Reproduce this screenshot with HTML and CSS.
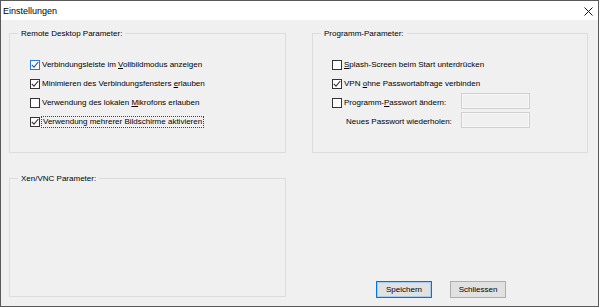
FILE: index.html
```html
<!DOCTYPE html>
<html lang="de">
<head>
  <meta charset="UTF-8">
  <title>Einstellungen</title>
  <link rel="stylesheet" href="styles.css">
</head>
<body>
  <div class="window">
    <div class="titlebar">
      <span class="title">Einstellungen</span>
      <svg class="close" width="9" height="9" viewBox="0 0 9 9">
        <path d="M0.5 0.5 L8.5 8.5 M8.5 0.5 L0.5 8.5" stroke="#111" stroke-width="1"/>
      </svg>
    </div>

    <div class="content">
      <div class="top-row">
        <!-- Remote Desktop -->
        <div class="group group-left">
          <div class="group-title">Remote Desktop Parameter:</div>
          <div class="options options-left">
            <div class="option">
              <span class="box box-hover checked">
                <svg width="8" height="8" viewBox="0 0 8 8"><path d="M0.8 3.8 L3 6.2 L7.3 1" fill="none" stroke="#1c5aa6" stroke-width="1.1"/></svg>
              </span>
              <span class="label">Verbindungsleiste im <u>V</u>ollbildmodus anzeigen</span>
            </div>
            <div class="option">
              <span class="box checked">
                <svg width="8" height="8" viewBox="0 0 8 8"><path d="M0.8 3.8 L3 6.2 L7.3 1" fill="none" stroke="#333" stroke-width="1.1"/></svg>
              </span>
              <span class="label">Minimieren des Verbindungsfensters <u>e</u>rlauben</span>
            </div>
            <div class="option">
              <span class="box"></span>
              <span class="label">Verwendung des lokalen <u>M</u>ikrofons erlauben</span>
            </div>
            <div class="option">
              <span class="box checked">
                <svg width="8" height="8" viewBox="0 0 8 8"><path d="M0.8 3.8 L3 6.2 L7.3 1" fill="none" stroke="#333" stroke-width="1.1"/></svg>
              </span>
              <span class="label focused">Verwendung mehrerer Bildschirme aktivieren</span>
            </div>
          </div>
        </div>

        <!-- Programm -->
        <div class="group group-right">
          <div class="group-title">Programm-Parameter:</div>
          <div class="options options-right">
            <div class="option">
              <span class="box"></span>
              <span class="label"><u>S</u>plash-Screen beim Start unterdrücken</span>
            </div>
            <div class="option">
              <span class="box checked">
                <svg width="8" height="8" viewBox="0 0 8 8"><path d="M0.8 3.8 L3 6.2 L7.3 1" fill="none" stroke="#333" stroke-width="1.1"/></svg>
              </span>
              <span class="label">VPN <u>o</u>hne Passwortabfrage verbinden</span>
            </div>
            <div class="option field-row">
              <div class="field-label">
                <span class="box"></span>
                <span class="label">Programm-<u>P</u>asswort ändern:</span>
              </div>
              <div class="textbox"></div>
            </div>
            <div class="option field-row">
              <div class="field-label indent">
                <span class="label">Neues Passwort wiederholen:</span>
              </div>
              <div class="textbox"></div>
            </div>
          </div>
        </div>
      </div>

      <div class="bottom-row">
        <div class="group group-xen">
          <div class="group-title">Xen/VNC Parameter:</div>
        </div>
        <div class="buttons">
          <button class="btn btn-default">Speichern</button>
          <button class="btn">Schliessen</button>
        </div>
      </div>
    </div>
  </div>
</body>
</html>
```

FILE: styles.css
```css
html, body {
  margin: 0;
  padding: 0;
  background: #ffffff;
}
body {
  font-family: "Liberation Sans", Arial, sans-serif;
  font-size: 8px;
  color: #000;
}
.window {
  width: 599px;
  height: 307px;
  box-sizing: border-box;
  border: 1px solid #595959;
  background: #f0f0f0;
}
.titlebar {
  height: 19px;
  background: #fff;
  display: flex;
  align-items: center;
  justify-content: space-between;
  padding: 0 5px 0 2px;
}
.title {
  font-size: 9px;
  line-height: 12px;
}
.close {
  display: block;
  margin-top: 1px;
}
.content {
  padding: 13px 0 0 8px;
}
.top-row {
  display: flex;
  gap: 26px;
}
.group {
  border: 1px solid #dcdcdc;
  box-sizing: border-box;
}
.group-left {
  width: 277px;
  height: 120px;
}
.group-right {
  width: 276px;
  height: 120px;
}
.group-xen {
  width: 277px;
  height: 119px;
}
.group-title {
  display: inline-block;
  margin: -7px 0 0 8px;
  padding: 0 3px;
  background: #f0f0f0;
  line-height: 13px;
  vertical-align: top;
}
.options {
  padding-top: 12px;
  display: flex;
  flex-direction: column;
}
.options-left {
  padding-left: 20px;
}
.options-right {
  padding-left: 19px;
}
.option {
  display: flex;
  align-items: center;
  height: 19px;
}
.box {
  width: 10px;
  height: 10px;
  box-sizing: border-box;
  border: 1px solid #333;
  background: #fff;
  display: flex;
  align-items: center;
  justify-content: center;
  flex-shrink: 0;
}
.box svg {
  display: block;
}
.box-hover {
  border-color: #2b7bd6;
}
.label {
  margin-left: 2px;
  line-height: 10px;
  white-space: nowrap;
}
.label u {
  text-decoration-thickness: 1px;
  text-underline-offset: 1px;
}
.focused {
  margin-left: 1px;
  padding: 0 1px;
  border: 1px dotted #444;
}
.field-row {
  align-items: flex-start;
}
.field-label {
  width: 129px;
  height: 19px;
  display: flex;
  align-items: center;
  box-sizing: border-box;
}
.field-label.indent {
  padding-left: 12px;
}
.textbox {
  width: 69px;
  height: 16px;
  box-sizing: border-box;
  border: 1px solid #d0d0d0;
  background: #f0f0f0;
  box-shadow: inset 0 0 0 1px #f7f7f7;
}
.bottom-row {
  display: flex;
  align-items: flex-end;
  margin-top: 25px;
}
.buttons {
  display: flex;
  gap: 18px;
  margin-left: 90px;
  margin-bottom: -1px;
}
.btn {
  width: 56px;
  height: 17px;
  padding: 0;
  box-sizing: border-box;
  border: 1px solid #adadad;
  background: #e1e1e1;
  font-family: "Liberation Sans", Arial, sans-serif;
  font-size: 8px;
  color: #000;
}
.btn-default {
  border-color: #0078d7;
  box-shadow: inset 0 0 0 1px #a8ccee;
}
```
